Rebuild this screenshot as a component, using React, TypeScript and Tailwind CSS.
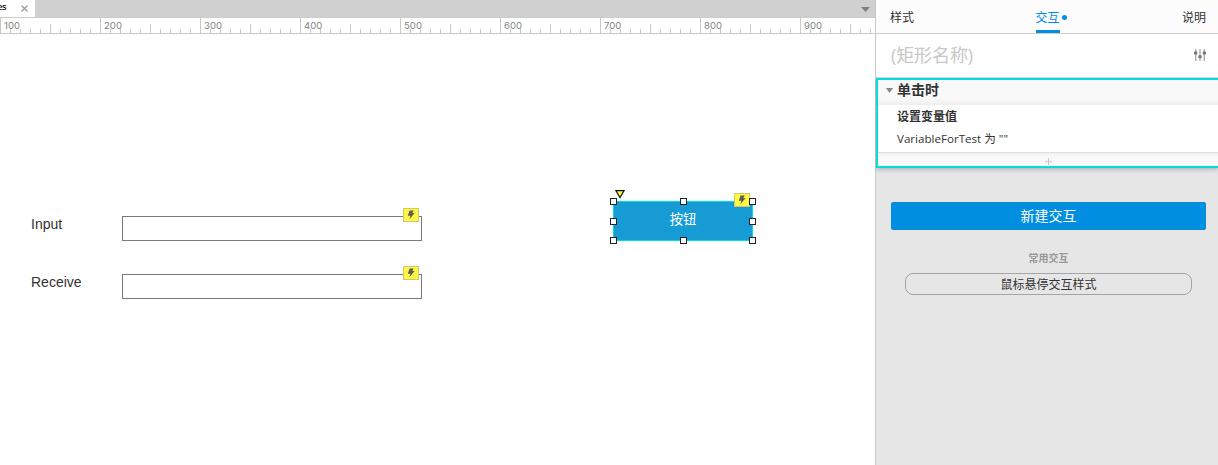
import React from 'react';

const rulerMarks = [100, 200, 300, 400, 500, 600, 700, 800, 900];
const tickHeights = ['h-[15px]', 'h-1', 'h-1', 'h-1', 'h-1', 'h-[9px]', 'h-1', 'h-1', 'h-1', 'h-1'];

const handlePlaces = [
  'left-[-3px] top-[-3px]',
  'left-[67px] top-[-3px]',
  'left-[136px] top-[-3px]',
  'left-[-3px] top-[17px]',
  'left-[136px] top-[17px]',
  'left-[-3px] top-[36px]',
  'left-[67px] top-[36px]',
  'left-[136px] top-[36px]',
];

function Bolt({ className }: { className: string }) {
  return (
    <span className={`absolute flex h-[14px] w-4 items-center justify-center border border-[#cdc873] bg-[#fff843] ${className}`}>
      <svg width="8" height="10" viewBox="0 0 8 10" fill="#5c5c55">
        <path d="M2.6 0.5H6.8L5.3 3.1H7.6L2.2 9.6L3.5 5.8H0.8Z" />
      </svg>
    </span>
  );
}

function Ruler() {
  return (
    <div className="flex h-4 overflow-hidden border-b border-[#cccccc] bg-white">
      {rulerMarks.map((mark) => (
        <div key={mark} className="relative flex w-[100px] shrink-0 items-end">
          {tickHeights.map((height, i) => (
            <i key={i} className={`w-[10px] shrink-0 border-l border-[#c8c8c8] ${height}`} />
          ))}
          <span className="absolute left-1 top-0 font-['Inter',sans-serif] text-[9.6px] leading-[15px] text-[#858585]">{mark}</span>
        </div>
      ))}
    </div>
  );
}

function Field({ label, className }: { label: string; className: string }) {
  return (
    <div className={`absolute left-[31px] flex ${className}`}>
      <span className="w-[91px] font-['Liberation_Sans',sans-serif] text-[14px] leading-4 text-[#333333]">{label}</span>
      <div className="relative h-[25px] w-[300px] border border-[#797979] bg-white">
        <Bolt className="left-[280px] top-[-9px]" />
      </div>
    </div>
  );
}

function Canvas() {
  return (
    <div className="relative flex-1 overflow-hidden bg-white">
      <Field label="Input" className="top-[182px]" />
      <Field label="Receive" className="top-[240px]" />
      <svg className="absolute left-[615px] top-[156px]" width="10" height="9" viewBox="0 0 10 9">
        <path d="M1 0.7H9L5 7.6Z" fill="#fff843" stroke="#111111" strokeWidth="1.2" />
      </svg>
      <div className="absolute left-[613px] top-[167px] h-10 w-[140px] border border-[#00dede] bg-[#169bd5]">
        <span className="block pt-[7px] text-center text-[13.3px] leading-5 text-white">按钮</span>
        <Bolt className="left-[120px] top-[-9px]" />
        {handlePlaces.map((place) => (
          <i key={place} className={`absolute -ml-px -mt-px h-[7px] w-[7px] border border-[#222222] bg-white ${place}`} />
        ))}
      </div>
    </div>
  );
}

function Inspector() {
  return (
    <aside className="flex w-[343px] shrink-0 flex-col border-l border-[#c8c8c8] bg-[#e6e6e6] text-[#333333]">
      <nav className="flex h-[34px] justify-between border-b border-[#cccccc] bg-[#fcfcfc] pl-[14px] pr-3 text-[12px] leading-[35px]">
        <span>样式</span>
        <span className="relative mr-[1px] h-[33px] w-6 border-b-[3px] border-[#008fe0] text-[#008fe0]">
          交互
          <i className="absolute left-[26px] top-[15px] h-[5px] w-[5px] rounded-full bg-[#008fe0]" />
        </span>
        <span className="-mr-px pr-px">说明</span>
      </nav>
      <div className="flex h-11 items-center justify-between border-b border-[#d8d8d8] bg-white pl-[15px] pr-3">
        <span className="-mt-[2px] text-[18px] leading-6 tracking-[-0.1px] text-[#c8c8c8]">(矩形名称)</span>
        <svg className="-mt-px" width="12" height="12" viewBox="0 0 12 12" fill="#777777">
          <path d="M1 0h1.4v12H1zM5.3 0h1.4v12H5.3zM9.6 0H11v12H9.6z" opacity=".6" />
          <circle cx="1.7" cy="4" r="1.8" />
          <circle cx="6" cy="7.7" r="1.8" />
          <circle cx="10.3" cy="4" r="1.8" />
        </svg>
      </div>
      <section className="flex h-[90px] flex-col border-y-2 border-l-2 border-[#00dede] bg-[#f9f9f9] shadow-[0_2px_4px_rgba(0,0,0,0.2)]">
        <h2 className="flex h-[25px] items-center gap-1 bg-linear-to-b from-[#f9f9f9] from-75% to-[#eeeeee] pb-[5px] pl-2 text-[14px] font-bold leading-5">
          <svg width="7" height="5" viewBox="0 0 7 5" fill="#888888"><path d="M0 0H7L3.5 5Z" /></svg>
          单击时
        </h2>
        <div className="h-12 border-b border-[#dddddd] bg-white pl-[19px] text-[12px]">
          <h3 className="pt-[2px] font-bold leading-5">设置变量值</h3>
          <p className="pt-[2px] text-[11.6px] leading-5">VariableForTest 为 ""</p>
        </div>
        <div className="flex flex-1 items-center justify-center bg-linear-to-b from-[#f0f0f0] to-[#f9f9f9] to-30% pt-[3px]">
          <svg width="7" height="7" viewBox="0 0 7 7"><path d="M0 3.5H7" stroke="#dddddd" strokeWidth="2" /><path d="M3.5 0V7" stroke="#c8c8c8" /></svg>
        </div>
      </section>
      <div className="flex flex-col items-center px-[15px] pr-3 pt-[34px]">
        <button className="h-7 w-full rounded-[2px] bg-[#008fe0] text-[14px] leading-7 text-white">新建交互</button>
        <span className="mt-[20px] text-[10px] font-bold leading-4 text-[#999999]">常用交互</span>
        <button className="mt-[7px] h-[22px] w-[287px] rounded-[8px] border border-[#a5a5a5] pt-px text-[12px] leading-5">鼠标悬停交互样式</button>
      </div>
    </aside>
  );
}

export default function App() {
  return (
    <div className="flex h-[465px] w-[1218px] overflow-hidden bg-white font-['Open_Sans','Noto_Sans_CJK_SC',sans-serif]">
      <main className="flex w-[875px] shrink-0 flex-col">
        <div className="flex h-[18px] items-start justify-between border-b border-[#cccccc] bg-[#d0d0d0]">
          <div className="flex h-[17px] w-[35px] items-center justify-between bg-white pr-[7px] text-[9.5px] leading-[14px] text-[#222222]">
            <span className="-ml-[3px] pb-[3px] font-semibold tracking-[-0.4px]">es</span>
            <svg width="7" height="7" viewBox="0 0 7 7" stroke="#999999" strokeWidth="1.2"><path d="M.5 .5L6.5 6.5M6.5 .5L.5 6.5" /></svg>
          </div>
          <svg className="mr-[5px] mt-[7px]" width="9" height="5" viewBox="0 0 9 5" fill="#808080"><path d="M0 0H9L4.5 5Z" /></svg>
        </div>
        <Ruler />
        <Canvas />
      </main>
      <Inspector />
    </div>
  );
}
